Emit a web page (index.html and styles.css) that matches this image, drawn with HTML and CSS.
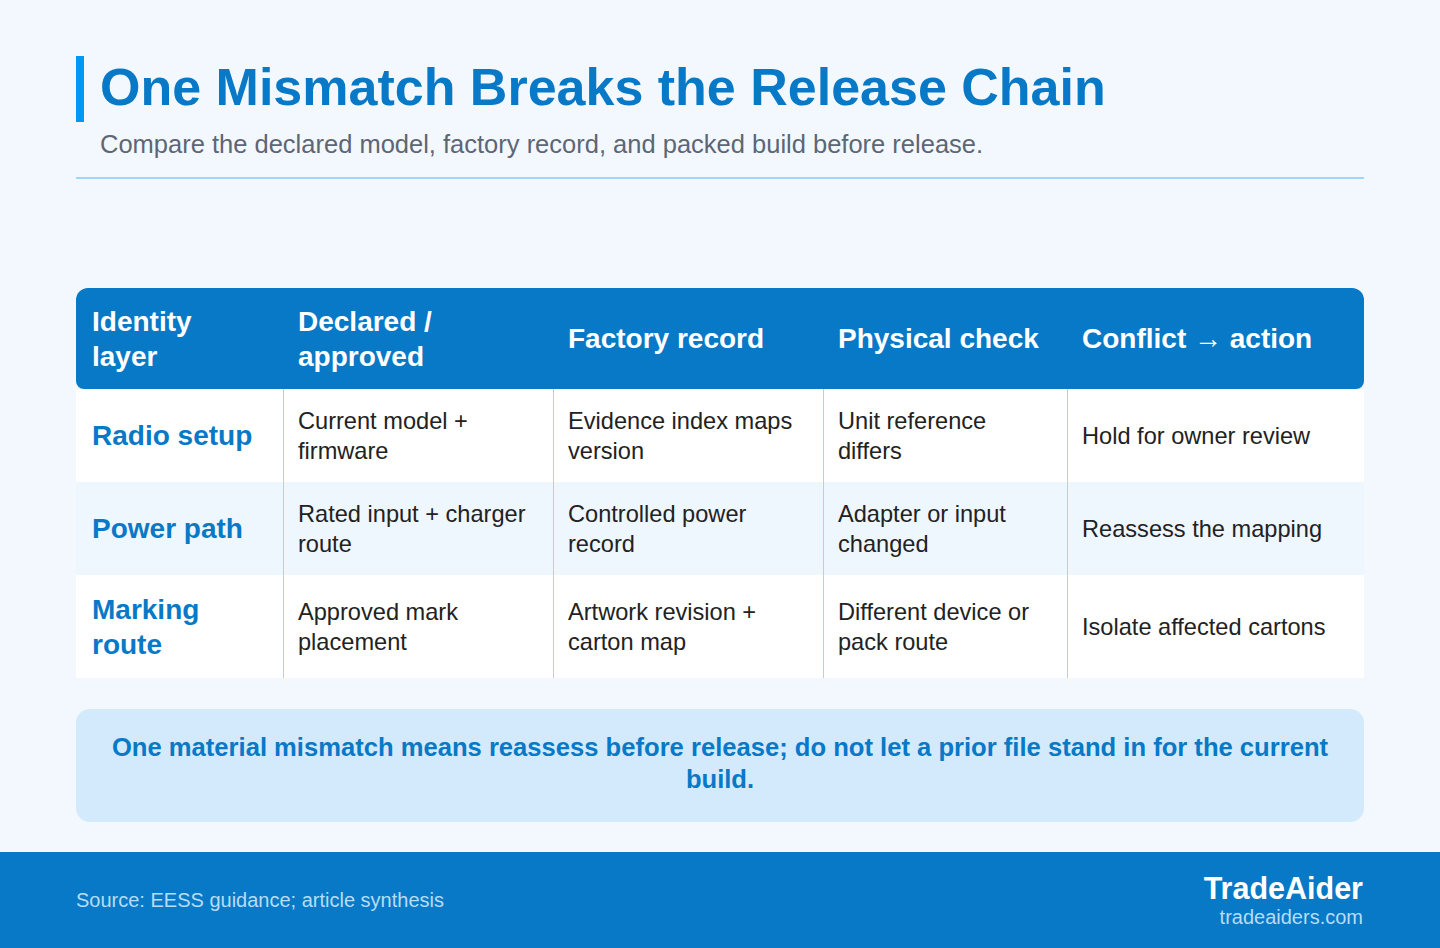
FILE: index.html
```html
<!DOCTYPE html>
<html lang="en">
<head>
<meta charset="utf-8">
<title>One Mismatch Breaks the Release Chain</title>
<link rel="stylesheet" href="styles.css">
</head>
<body>
<div class="page">
  <main class="content">
    <header class="head">
      <h1 class="title">One Mismatch Breaks the Release Chain</h1>
      <p class="subtitle">Compare the declared model, factory record, and packed build before release.</p>
    </header>

    <table class="grid">
      <colgroup>
        <col class="c1"><col class="c2"><col class="c3"><col class="c4"><col class="c5">
      </colgroup>
      <thead>
        <tr>
          <th>Identity<br>layer</th>
          <th>Declared /<br>approved</th>
          <th>Factory record</th>
          <th>Physical check</th>
          <th>Conflict → action</th>
        </tr>
      </thead>
      <tbody>
        <tr>
          <td class="layer">Radio setup</td>
          <td>Current model +<br>firmware</td>
          <td>Evidence index maps<br>version</td>
          <td>Unit reference<br>differs</td>
          <td>Hold for owner review</td>
        </tr>
        <tr class="alt">
          <td class="layer">Power path</td>
          <td>Rated input + charger<br>route</td>
          <td>Controlled power<br>record</td>
          <td>Adapter or input<br>changed</td>
          <td>Reassess the mapping</td>
        </tr>
        <tr>
          <td class="layer">Marking<br>route</td>
          <td>Approved mark<br>placement</td>
          <td>Artwork revision +<br>carton map</td>
          <td>Different device or<br>pack route</td>
          <td>Isolate affected cartons</td>
        </tr>
      </tbody>
    </table>

    <div class="callout">One material mismatch means reassess before release; do not let a prior file stand in for the current build.</div>
  </main>

  <footer class="footer">
    <div class="source">Source: EESS guidance; article synthesis</div>
    <div class="brand">
      <div class="brand-name">TradeAider</div>
      <div class="brand-url">tradeaiders.com</div>
    </div>
  </footer>
</div>
</body>
</html>
```

FILE: styles.css
```css
* { box-sizing: border-box; }
html, body { margin: 0; padding: 0; }
body {
  background: #f3f8fe;
  font-family: "Liberation Sans", Arial, sans-serif;
  color: #222;
}
.page {
  width: 1440px;
  height: 948px;
  display: flex;
  flex-direction: column;
}
.content {
  flex: 1;
  padding: 56px 76px 0 76px;
  display: flex;
  flex-direction: column;
}
.head {
  border-bottom: 2px solid #9fd6fb;
  padding-bottom: 17px;
}
.title {
  margin: 0;
  border-left: 8px solid #0098f5;
  padding-left: 16px;
  padding-bottom: 4px;
  font-size: 52px;
  line-height: 62px;
  font-weight: 700;
  color: #0879c6;
}
.subtitle {
  margin: 6px 0 0 24px;
  font-size: 25.5px;
  line-height: 32px;
  color: #5c6675;
}
.grid {
  margin-top: 109px;
  width: 100%;
  border-collapse: separate;
  border-spacing: 0;
  table-layout: fixed;
}
.c1 { width: 207px; }
.c2 { width: 270px; }
.c3 { width: 270px; }
.c4 { width: 244px; }
.c5 { width: 297px; }
.grid thead th {
  background: #0879c6;
  color: #fff;
  text-align: left;
  font-size: 28px;
  line-height: 35px;
  font-weight: 700;
  padding: 15px 16px 15px 15px;
  height: 101px;
  white-space: nowrap;
}
.grid thead th:first-child { border-radius: 12px 0 0 8px; padding-left: 16px; }
.grid thead th:last-child { border-radius: 0 12px 8px 0; }
.grid td {
  background: #fff;
  font-size: 23.6px;
  line-height: 30px;
  padding: 16px 14px;
  vertical-align: middle;
  border-left: 1px solid #a6d6f7;
  color: #222;
  white-space: nowrap;
}
.grid tbody tr { height: 93px; }
.grid tbody tr:last-child { height: 103px; }
.grid tbody tr.alt td { background: #eef6fe; }
.grid td.layer {
  border-left: none;
  padding-left: 16px;
  font-size: 28px;
  line-height: 35px;
  font-weight: 700;
  color: #0879c6;
}
.callout {
  margin-top: 31px;
  background: #d2eafc;
  border-radius: 14px;
  padding: 22px 32px;
  height: 113px;
  text-align: center;
  font-size: 25.6px;
  line-height: 32px;
  font-weight: 700;
  color: #0879c6;
}
.footer {
  height: 96px;
  background: #0879c6;
  display: flex;
  align-items: center;
  justify-content: space-between;
  padding: 0 77px 0 76px;
}
.source {
  font-size: 20px;
  color: #b7dcf6;
}
.brand {
  text-align: right;
}
.brand-name {
  font-size: 30.5px;
  line-height: 34px;
  font-weight: 700;
  color: #fff;
}
.brand-url {
  font-size: 20px;
  line-height: 25px;
  color: #b7dcf6;
}
```
